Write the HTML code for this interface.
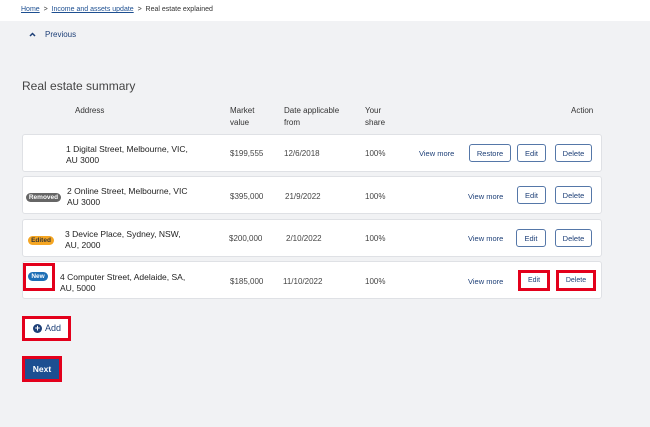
<!DOCTYPE html>
<html><head><style>
*{margin:0;padding:0;box-sizing:border-box}
body{width:650px;height:427px;background:#f1f2f4;font-family:"Liberation Sans",sans-serif;position:relative;overflow:hidden;color:#222}
.a{position:absolute;white-space:nowrap}
.hdr{position:absolute;left:0;top:0;width:650px;height:21px;background:#fff}
.bc{font-size:7px;top:6px;color:#333}
.bc u{color:#1d4f91}
.th{font-size:8px;color:#333;line-height:12px}
.card{position:absolute;left:22px;width:580px;height:38px;background:#fff;border:1px solid #dfe1e5;border-radius:3px}
.ad{font-size:8.5px;line-height:11px;color:#222}
.c{font-size:8px;color:#444}
.vm{font-size:7.5px;color:#1d3f77}
.btn{position:absolute;height:18px;border:1px solid #5577a8;border-radius:3px;background:#fff;font-size:7.5px;color:#1d3f77;display:flex;align-items:center;justify-content:center}
.red{position:absolute;border:3px solid #e3001b;display:flex;align-items:center;justify-content:center;font-size:7px;color:#1d3f77}
.badge{position:absolute;font-size:6.5px;font-weight:bold;color:#fff;border-radius:5px;text-align:center;line-height:9px;height:9px}
</style></head><body>
<div class="hdr"></div>
<div class="a bc" style="left:21px"><u>Home</u> &nbsp;&gt;&nbsp; <u>Income and assets update</u> &nbsp;&gt;&nbsp; Real estate explained</div>
<svg class="a" style="left:29px;top:32px" width="7" height="5" viewBox="0 0 7 5"><path d="M1 4 L3.5 1.5 L6 4" stroke="#1d3f77" stroke-width="1.5" fill="none"/></svg>
<div class="a" style="left:45px;top:30px;font-size:8px;color:#1d3f77">Previous</div>
<div class="a" style="left:22px;top:79px;font-size:12px;color:#444">Real estate summary</div>
<div class="a th" style="left:75px;top:105px">Address</div>
<div class="a th" style="left:230px;top:105px">Market<br>value</div>
<div class="a th" style="left:284px;top:105px">Date applicable<br>from</div>
<div class="a th" style="left:365px;top:105px">Your<br>share</div>
<div class="a th" style="left:571px;top:105px">Action</div>

<div class="card" style="top:134px"></div>
<div class="a ad" style="left:66px;top:144px">1 Digital Street, Melbourne, VIC,<br>AU 3000</div>
<div class="a c" style="left:230px;top:149px">$199,555</div>
<div class="a c" style="left:284px;top:149px">12/6/2018</div>
<div class="a c" style="left:365px;top:149px">100%</div>
<div class="a vm" style="left:419px;top:149px">View more</div>
<div class="btn" style="left:469px;top:144px;width:42px">Restore</div>
<div class="btn" style="left:517px;top:144px;width:29px">Edit</div>
<div class="btn" style="left:555px;top:144px;width:37px">Delete</div>

<div class="card" style="top:176px"></div>
<div class="badge" style="left:26px;top:193px;width:35px;background:#666">Removed</div>
<div class="a ad" style="left:67px;top:186px">2 Online Street, Melbourne, VIC<br>AU 3000</div>
<div class="a c" style="left:230px;top:192px">$395,000</div>
<div class="a c" style="left:285px;top:192px">21/9/2022</div>
<div class="a c" style="left:365px;top:192px">100%</div>
<div class="a vm" style="left:468px;top:192px">View more</div>
<div class="btn" style="left:517px;top:186px;width:29px">Edit</div>
<div class="btn" style="left:555px;top:186px;width:37px">Delete</div>

<div class="card" style="top:219px"></div>
<div class="badge" style="left:28px;top:236px;width:26px;background:#f5a623;color:#333">Edited</div>
<div class="a ad" style="left:65px;top:229px">3 Device Place, Sydney, NSW,<br>AU, 2000</div>
<div class="a c" style="left:229px;top:234px">$200,000</div>
<div class="a c" style="left:286px;top:234px">2/10/2022</div>
<div class="a c" style="left:365px;top:234px">100%</div>
<div class="a vm" style="left:468px;top:234px">View more</div>
<div class="btn" style="left:516px;top:229px;width:30px">Edit</div>
<div class="btn" style="left:555px;top:229px;width:37px">Delete</div>

<div class="card" style="top:261px"></div>
<div class="red" style="left:23px;top:263px;width:32px;height:28px"></div>
<div class="badge" style="left:28px;top:272px;width:20px;background:#1e6fb5">New</div>
<div class="a ad" style="left:60px;top:272px">4 Computer Street, Adelaide, SA,<br>AU, 5000</div>
<div class="a c" style="left:230px;top:277px">$185,000</div>
<div class="a c" style="left:283px;top:277px">11/10/2022</div>
<div class="a c" style="left:365px;top:277px">100%</div>
<div class="a vm" style="left:468px;top:277px">View more</div>
<div class="red" style="left:518px;top:270px;width:32px;height:21px;background:#fff">Edit</div>
<div class="red" style="left:556px;top:270px;width:40px;height:21px;background:#fff">Delete</div>

<div class="red" style="left:22px;top:316px;width:49px;height:25px;background:#fff"></div>
<div class="a" style="left:33px;top:324px;width:9px;height:9px;border-radius:50%;background:#1d3f77;color:#fff;font-size:9px;line-height:9px;text-align:center;font-weight:bold">+</div>
<div class="a" style="left:45px;top:323px;font-size:9px;color:#1d3f77">Add</div>

<div class="red" style="left:22px;top:356px;width:40px;height:26px"></div>
<div class="a" style="left:25px;top:359px;width:34px;height:20px;background:#1d4f91;color:#fff;font-size:8.5px;font-weight:bold;text-align:center;line-height:20px">Next</div>
</body></html>
